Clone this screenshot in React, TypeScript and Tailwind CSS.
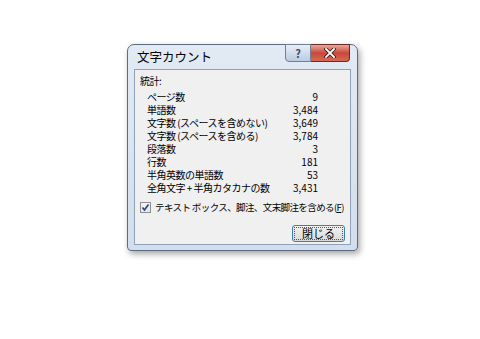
const rows: [string, string][] = [
  ["ページ数", "9"],
  ["単語数", "3,484"],
  ["文字数 (スペースを含めない)", "3,649"],
  ["文字数 (スペースを含める)", "3,784"],
  ["段落数", "3"],
  ["行数", "181"],
  ["半角英数の単語数", "53"],
  ["全角文字 + 半角カタカナの数", "3,431"],
];

const font = { fontFamily: '"Noto Sans CJK JP", "Noto Sans", sans-serif' };

export default function App() {
  return (
    <div className="w-[480px] h-[339px] bg-white overflow-hidden" style={font}>
      <div className="ml-[127px] mt-[44px] w-[231px] h-[207px] rounded-t-[7px] rounded-b-[4px] border border-[#5b6b80] bg-gradient-to-b from-[#e2eaf4] to-[#d3deec] shadow-[2px_3px_6px_rgba(0,0,0,0.35)] flex flex-col">
        <div className="h-[24px] flex items-start justify-between pl-[9px] pr-[7px]">
          <span className="mt-[4px] text-[12.5px] leading-[16px] text-black">文字カウント</span>
          <div className="flex -mt-px">
            <div className="w-[26px] h-[18px] rounded-bl-[4px] border border-[#6f7f94] bg-gradient-to-b from-[#e8eef6] to-[#bccbe0] flex items-center justify-center text-[11px] leading-none font-bold text-[#3b4a60]">
              ?
            </div>
            <div className="w-[39px] h-[18px] rounded-br-[4px] border border-l-0 border-[#6b2a24] bg-gradient-to-b from-[#e6a89e] via-[#c8473a] to-[#d66a55] flex items-center justify-center">
              <svg width="12" height="10" viewBox="0 0 12 10">
                <path d="M2 1 L10 9 M10 1 L2 9" stroke="#3a1a15" strokeWidth="3.4" strokeLinecap="square" />
                <path d="M2 1 L10 9 M10 1 L2 9" stroke="#ffffff" strokeWidth="1.8" strokeLinecap="square" />
              </svg>
            </div>
          </div>
        </div>
        <div className="flex-1 mx-[6px] mb-[5px] border border-[#8fa1b8] bg-[#f0f0f0] flex flex-col px-[5px] pt-[4px] text-[10px] tracking-[-0.5px] leading-[13px] text-black whitespace-nowrap">
          <div className="mb-[3px]">統計:</div>
          <div className="flex flex-col pl-[7px]">
            {rows.map(([label, value]) => (
              <div key={label} className="flex w-[171px] justify-between">
                <span>{label}</span>
                <span className="tracking-normal">{value}</span>
              </div>
            ))}
          </div>
          <div className="flex items-center gap-[4px] mt-[7px]">
            <div className="w-[11px] h-[11px] border border-[#8e8f8f] bg-gradient-to-b from-[#f4f4f4] to-[#e0e6f0] flex items-center justify-center">
              <svg width="9" height="9" viewBox="0 0 9 9">
                <path d="M1.5 4.5 L3.5 7 L7.5 1.5" stroke="#2a3f7a" strokeWidth="1.6" fill="none" />
              </svg>
            </div>
            <span className="text-[9.5px] tracking-[-0.6px]">テキスト ボックス、脚注、文末脚注を含める(<span className="underline">F</span>)</span>
          </div>
          <div className="flex justify-end mt-[11px]">
            <div className="w-[53px] h-[17px] rounded-[3px] border border-[#3c7fb1] bg-gradient-to-b from-[#f2f2f2] to-[#d9d9d9] flex items-center justify-center p-[1px]">
              <div className="w-full h-full border border-dotted border-[#555] flex items-center justify-center text-[11px] leading-none tracking-normal">
                閉じる
              </div>
            </div>
          </div>
        </div>
      </div>
    </div>
  );
}
